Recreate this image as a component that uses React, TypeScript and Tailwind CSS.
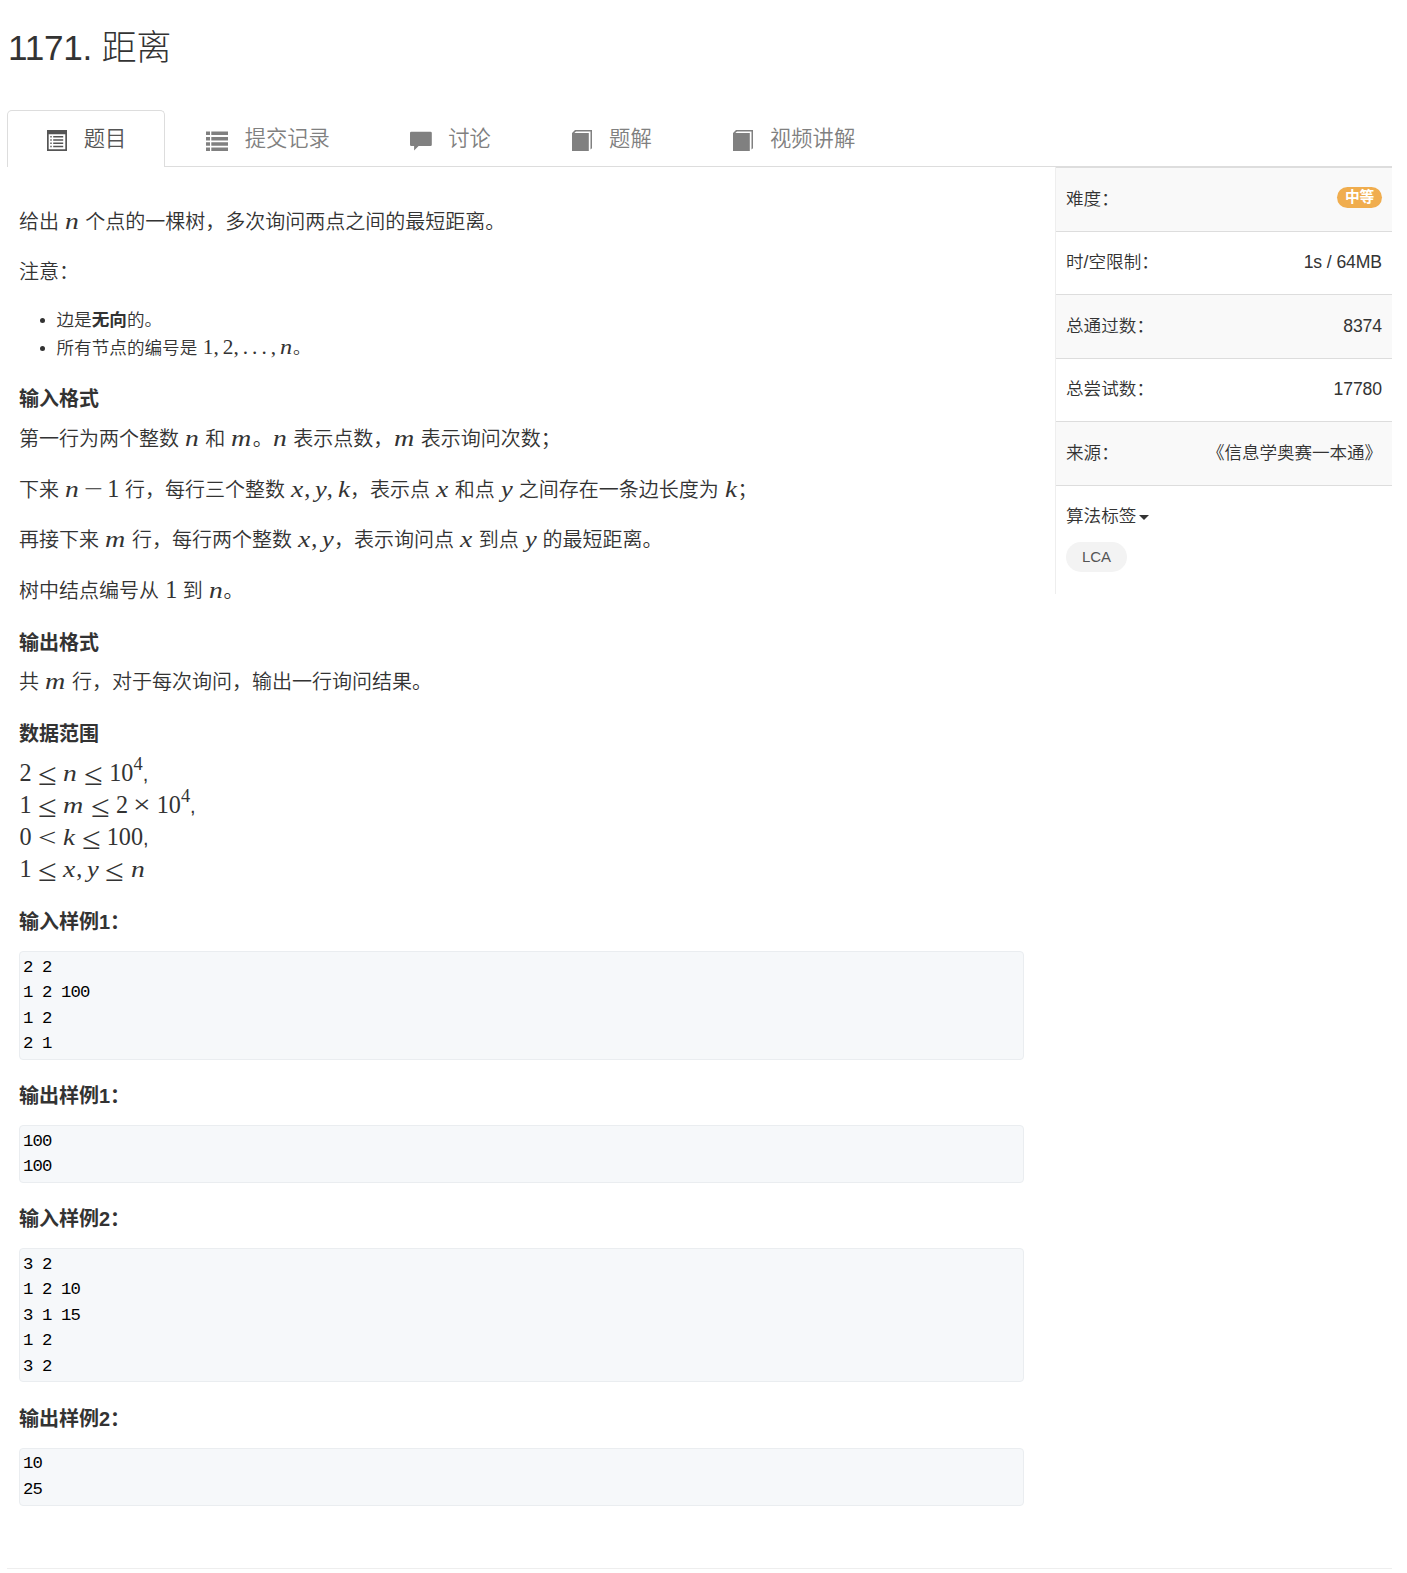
import { Fragment, type ReactNode } from "react";

/* Advance width and horizontal stretch for every math symbol, in em. */
const SYMBOLS: Record<string, { box: string; ink: string }> = {
  n: { box: "w-[0.6em]", ink: "italic text-[0.95em] scale-x-[1.2]" },
  m: { box: "w-[0.878em]", ink: "italic text-[0.95em] scale-x-[1.22]" },
  x: { box: "w-[0.54em]", ink: "italic text-[0.95em] scale-x-[1.2]" },
  y: { box: "w-[0.5em]", ink: "italic text-[0.95em] scale-x-[1.15]" },
  k: { box: "w-[0.52em]", ink: "italic text-[0.97em] scale-x-[1.15]" },
  ",": { box: "w-[0.44em]", ink: "" },
  ".": { box: "w-[0.44em]", ink: "" },
  "≤": { box: "w-[0.778em] mx-[0.263em]", ink: "translate-y-[0.06em] scale-x-[1.4] scale-y-[1.3]" },
  "<": { box: "w-[0.778em] mx-[0.25em]", ink: "translate-y-[0.04em] scale-x-[1.35]" },
  "−": { box: "w-[0.76em] mx-[0.19em]", ink: "scale-x-[1.4]" },
  "×": { box: "w-[0.74em] mx-[0.222em]", ink: "scale-x-[1.3]" },
};

/** Inline formula. `^d` raises a single digit. */
function Tex({ children }: { children: string }) {
  const tokens = children.match(/\^.|[^\s]/g) ?? [];
  return (
    <span className="inline-block pl-[0.6px] font-['Liberation_Serif',serif] text-[1.21em] leading-none font-normal whitespace-nowrap">
      {tokens.map((token, i) => {
        if (token[0] === "^") {
          return (
            <sup key={i} className="relative top-[-0.58em] align-baseline text-[0.76em] leading-none">
              {token[1]}
            </sup>
          );
        }
        const symbol = SYMBOLS[token];
        if (!symbol) return <Fragment key={i}>{token}</Fragment>;
        return (
          <span key={i} className={`inline-block ${symbol.box}`}>
            <span className={`inline-block origin-left ${symbol.ink}`}>{token}</span>
          </span>
        );
      })}
    </span>
  );
}

function ListAltIcon() {
  return (
    <svg viewBox="0 0 20 21" className="h-[21px] w-[20px]" fill="currentColor" aria-hidden>
      <path
        fillRule="evenodd"
        d="M0 0h20v21H0zM1.7 4.2v15h16.6v-15zM3.3 6h1.4v1.4H3.3zM6.2 6h10v1.4h-10zM3.3 9.3h1.4v1.4H3.3zM6.2 9.3h10v1.4h-10zM3.3 12.6h1.4V14H3.3zM6.2 12.6h10V14h-10zM3.3 15.8h1.4v1.4H3.3zM6.2 15.8h10v1.4h-10z"
      />
    </svg>
  );
}

function ListIcon() {
  return (
    <svg viewBox="0 0 22 21" className="h-[21px] w-[22px] shrink-0" fill="currentColor" aria-hidden>
      <path d="M0 1.5h4v3.5H0zM5.3 1.5H22v3.5H5.3zM0 6.900h4v3.500H0zM5.300 6.900H22v3.500H5.300zM0 12.200h4v3.500H0zM5.300 12.200H22v3.500H5.300zM0 17.500h4V21H0zM5.300 17.500H22V21H5.300z" />
    </svg>
  );
}

function CommentIcon() {
  return (
    <svg viewBox="0 0 22 21" className="h-[21px] w-[22px] shrink-0" fill="currentColor" aria-hidden>
      <path d="M1.3 1.7h19.2q1.3 0 1.3 1.3v11.7q0 1.3-1.3 1.3H8.6L4.1 20.6V16H1.3Q0 16 0 14.7V3q0-1.3 1.3-1.3z" />
    </svg>
  );
}

function BookIcon() {
  return (
    <svg viewBox="0 0 20 21" className="h-[21px] w-[20px]" fill="currentColor" aria-hidden>
      <path d="M0 3L3 0H20v18.300l-1.500 1.300V1.500H4L2.300 3H16.800V21H0z" />
    </svg>
  );
}

const TABS: { label: string; icon: ReactNode }[] = [
  { label: "题目", icon: <ListAltIcon /> },
  { label: "提交记录", icon: <ListIcon /> },
  { label: "讨论", icon: <CommentIcon /> },
  { label: "题解", icon: <BookIcon /> },
  { label: "视频讲解", icon: <BookIcon /> },
];

function Tabs() {
  return (
    <nav className="flex h-[57px] gap-[3px] border-b border-[#ddd]">
      {TABS.map((tab, i) => (
        <a
          key={tab.label}
          className={
            i === 0
              ? "flex h-[57px] items-center rounded-t-[5px] border border-b-0 border-[#ddd] bg-white px-[37.5px] pt-[2px] text-[#555]"
              : "flex h-[57px] items-center border border-b-0 border-transparent px-[37.5px] pt-[2px] text-[#808080]"
          }
        >
          <span className="flex w-[22px] justify-center">{tab.icon}</span>
          <span className="ml-[16.3px] text-[21.3px] leading-none">{tab.label}</span>
        </a>
      ))}
    </nav>
  );
}

function Heading({ children }: { children: ReactNode }) {
  return <h4 className="h-8 text-[20px] leading-[34px] font-bold">{children}</h4>;
}

function Line({ children }: { children: ReactNode }) {
  return <p className="h-8 text-[20px] leading-[34px] whitespace-nowrap">{children}</p>;
}

function Sample({ title, text }: { title: string; text: string }) {
  return (
    <section className="mb-[19.4px]">
      <Heading>{title}</Heading>
      <pre className="mt-[14px] rounded-[4px] border border-[#eaedf0] bg-[#f6f8fa] px-[3px] pt-[2.6px] pb-[2.4px] font-['Liberation_Mono',monospace] text-[17.3px] leading-[25.4px] font-normal tracking-[-0.86px] text-black">
        {text}
      </pre>
    </section>
  );
}

function Statement() {
  return (
    <article className="w-[1005px] pt-[38px]">
      <div className="flex flex-col gap-[18px]">
        <Line>
          给出 <Tex>n</Tex> 个点的一棵树，多次询问两点之间的最短距离。
        </Line>
        <Line>注意：</Line>
      </div>

      <ul className="mt-[19px] list-none pl-[21px] text-[17.6px] leading-7">
        <li className="flex h-7 items-center">
          <span className="mt-px mr-[11.5px] size-[5px] rounded-full bg-[#333]" />
          边是<b className="font-bold">无向</b>的。
        </li>
        <li className="flex h-7 items-center">
          <span className="mt-px mr-[11.5px] size-[5px] rounded-full bg-[#333]" />
          <span>
            所有节点的编号是 <Tex>1,2,...,n</Tex>。
          </span>
        </li>
      </ul>

      <div className="mt-5">
        <Heading>输入格式</Heading>
        <div className="mt-2 flex flex-col gap-[18.6px]">
          <Line>
            第一行为两个整数 <Tex>n</Tex> 和 <Tex>m</Tex>。<Tex>n</Tex> 表示点数，<Tex>m</Tex> 表示询问次数；
          </Line>
          <Line>
            下来 <Tex>n−1</Tex> 行，每行三个整数 <Tex>x,y,k</Tex>，表示点 <Tex>x</Tex> 和点 <Tex>y</Tex>{" "}
            之间存在一条边长度为 <Tex>k</Tex>；
          </Line>
          <Line>
            再接下来 <Tex>m</Tex> 行，每行两个整数 <Tex>x,y</Tex>，表示询问点 <Tex>x</Tex> 到点 <Tex>y</Tex>{" "}
            的最短距离。
          </Line>
          <Line>
            树中结点编号从 <Tex>1</Tex> 到 <Tex>n</Tex>。
          </Line>
        </div>
      </div>

      <div className="mt-5">
        <Heading>输出格式</Heading>
        <div className="mt-[7px]">
          <Line>
            共 <Tex>m</Tex> 行，对于每次询问，输出一行询问结果。
          </Line>
        </div>
      </div>

      <div className="mt-5">
        <Heading>数据范围</Heading>
        <div className="mt-[8px] -mb-px">
          <Line>
            <Tex>2≤n≤10^4</Tex>,
          </Line>
          <Line>
            <Tex>1≤m≤2×10^4</Tex>,
          </Line>
          <Line>
            <Tex>{"0<k≤100"}</Tex>,
          </Line>
          <Line>
            <Tex>1≤x,y≤n</Tex>
          </Line>
        </div>
      </div>

      <div className="mt-[21.4px]">
        <Sample title="输入样例1：" text={"2 2\n1 2 100\n1 2\n2 1"} />
        <Sample title="输出样例1：" text={"100\n100"} />
        <Sample title="输入样例2：" text={"3 2\n1 2 10\n3 1 15\n1 2\n3 2"} />
        <Sample title="输出样例2：" text={"10\n25"} />
      </div>
    </article>
  );
}

const INFO: { label: string; value: ReactNode }[] = [
  {
    label: "难度：",
    value: (
      <span className="mt-[3.5px] block h-[21px] w-[45px] rounded-full bg-[#f0ad4e] text-center text-[14.7px] leading-[20px] font-bold text-white">
        中等
      </span>
    ),
  },
  { label: "时/空限制：", value: "1s / 64MB" },
  { label: "总通过数：", value: "8374" },
  { label: "总尝试数：", value: "17780" },
  { label: "来源：", value: "《信息学奥赛一本通》" },
];

function InfoPanel() {
  return (
    <aside className="h-[427px] w-[337px] border-l border-[#eee] text-[17.6px] leading-[30px]">
      {INFO.map((row) => (
        <div
          key={row.label}
          className="flex h-[63.5px] justify-between border-t border-[#ddd] px-[10px] pt-[15.5px] odd:bg-[#f9f9f9]"
        >
          <span>{row.label}</span>
          <span className="tracking-[-0.1px]">{row.value}</span>
        </div>
      ))}
      <div className="border-t border-[#ddd] px-[10px] pt-[15px]">
        <div className="flex items-center">
          算法标签
          <svg viewBox="0 0 10 5" className="mt-[3px] ml-[3px] h-[5px] w-[10px]" fill="currentColor" aria-hidden>
            <path d="M0 0h10L5 5z" />
          </svg>
        </div>
        <span className="mt-[11px] block h-[30px] w-[61px] rounded-full bg-[#f3f3f3] text-center text-[15px] leading-[29px] text-[#555]">
          LCA
        </span>
      </div>
    </aside>
  );
}

export default function App() {
  return (
    <main className="h-[1573px] w-[1407px] overflow-hidden bg-white pr-[15px] pl-[7px] font-['Liberation_Sans','Noto_Sans_CJK_SC',sans-serif] font-[350] text-[#333]">
      <h1 className="h-[110px] pt-[28px] pl-px text-[35.2px] leading-[40px] font-light tracking-[-0.3px]">1171. 距离</h1>
      <Tabs />
      <div className="flex h-[1401px] justify-between pl-[12px]">
        <Statement />
        <InfoPanel />
      </div>
      <hr className="border-t border-[#eee]" />
    </main>
  );
}
